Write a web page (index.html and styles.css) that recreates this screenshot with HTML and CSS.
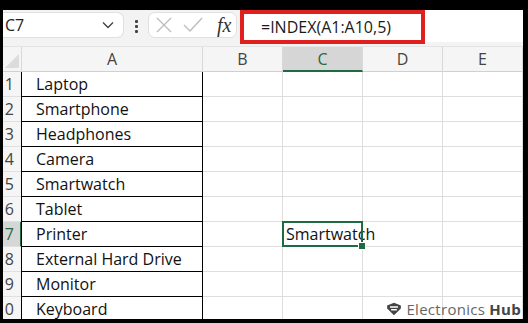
FILE: index.html
```html
<!DOCTYPE html>
<html lang="en">
<head>
    <meta charset="UTF-8">
    <title>INDEX example</title>
    <link rel="stylesheet" href="styles.css">
</head>
<body>
    <div class="screen">
        <div class="toolbar">
            <div class="namebox">
                <span>C7</span>
                <svg class="chev" width="12" height="8" viewBox="0 0 12 8"><path d="M1 1.5 L6 6.5 L11 1.5" fill="none" stroke="#444" stroke-width="1.4"/></svg>
            </div>
            <div class="dots"><i></i><i></i><i></i></div>
            <div class="fxbox">
                <svg width="18" height="18" viewBox="0 0 18 18"><path d="M2 2 L16 16 M16 2 L2 16" stroke="#bdbdbd" stroke-width="1.4"/></svg>
                <svg width="20" height="16" viewBox="0 0 20 16"><path d="M1 8 L7 14 L19 1" fill="none" stroke="#bdbdbd" stroke-width="1.4"/></svg>
                <span class="fx">fx</span>
            </div>
            <div class="formula">
                <div class="highlight">=INDEX(A1:A10,5)</div>
            </div>
        </div>
        <div class="sheet">
            <div class="corner"><span class="tri"></span></div>
            <div class="colhead">A</div>
            <div class="colhead">B</div>
            <div class="colhead active">C</div>
            <div class="colhead">D</div>
            <div class="colhead">E</div>

            <div class="rowhead">1</div><div class="cell data">Laptop</div><div class="cell"></div><div class="cell"></div><div class="cell"></div><div class="cell"></div>
            <div class="rowhead">2</div><div class="cell data">Smartphone</div><div class="cell"></div><div class="cell"></div><div class="cell"></div><div class="cell"></div>
            <div class="rowhead">3</div><div class="cell data">Headphones</div><div class="cell"></div><div class="cell"></div><div class="cell"></div><div class="cell"></div>
            <div class="rowhead">4</div><div class="cell data">Camera</div><div class="cell"></div><div class="cell"></div><div class="cell"></div><div class="cell"></div>
            <div class="rowhead">5</div><div class="cell data">Smartwatch</div><div class="cell"></div><div class="cell"></div><div class="cell"></div><div class="cell"></div>
            <div class="rowhead">6</div><div class="cell data">Tablet</div><div class="cell"></div><div class="cell"></div><div class="cell"></div><div class="cell"></div>
            <div class="rowhead active">7</div><div class="cell data">Printer</div><div class="cell"></div><div class="cell selected"><span class="value">Smartwatch</span><span class="handle"></span></div><div class="cell"></div><div class="cell"></div>
            <div class="rowhead">8</div><div class="cell data">External Hard Drive</div><div class="cell"></div><div class="cell"></div><div class="cell"></div><div class="cell"></div>
            <div class="rowhead">9</div><div class="cell data">Monitor</div><div class="cell"></div><div class="cell"></div><div class="cell"></div><div class="cell"></div>
            <div class="rowhead">10</div><div class="cell data">Keyboard</div><div class="cell"></div><div class="cell"></div><div class="cell"></div><div class="cell"></div>
        </div>
        <div class="watermark">
            <svg width="16" height="14" viewBox="0 0 14 12"><path d="M7 0.5 L13 3 L13 5.5 L7 11.5 L1 5.5 L1 3 Z" fill="#444"/><path d="M3.5 4.2 L10.5 4.2 M4.5 6.6 L9.5 6.6" stroke="#fff" stroke-width="1.3"/></svg>
            <span>Electronics</span> <b>Hub</b>
        </div>
    </div>
</body>
</html>
```

FILE: styles.css
```css
html, body {
    margin: 0;
    padding: 0;
    background: #000;
}

.screen {
    position: relative;
    width: 520px;
    height: 309px;
    margin: 10px 0 0 3px;
    background: #fff;
    overflow: hidden;
    font-family: "Open Sans", "Noto Sans", sans-serif;
}

.toolbar {
    display: flex;
    align-items: flex-start;
    height: 37px;
    background: #f3f3f3;
    border-bottom: 1px solid #e3e3e3;
    box-sizing: border-box;
}

.namebox {
    display: flex;
    align-items: center;
    justify-content: space-between;
    width: 121px;
    height: 26px;
    margin-top: 2px;
    padding: 0 9px 0 2px;
    box-sizing: border-box;
    background: #fff;
    border: 1px solid #e0e0e0;
    border-left: none;
    border-radius: 0 7px 7px 0;
    font-size: 16px;
    color: #222;
}

.dots {
    display: flex;
    flex-direction: column;
    gap: 2px;
    margin: 10px 10px 0 11px;
}

.dots i {
    display: block;
    width: 3px;
    height: 3px;
    background: #444;
    border-radius: 1px;
}

.fxbox {
    display: flex;
    align-items: center;
    gap: 10px;
    width: 89px;
    height: 26px;
    margin-top: 2px;
    padding: 0 4px 0 6px;
    box-sizing: border-box;
    background: #fff;
    border: 1px solid #e0e0e0;
    border-radius: 7px;
}

.fx {
    margin-left: 4px;
    font-family: "Liberation Serif", serif;
    font-style: italic;
    font-size: 20px;
    color: #333;
}

.formula {
    flex: 1;
    height: 32px;
    margin-left: 3px;
    background: #fff;
}

.highlight {
    width: 185px;
    height: 34px;
    box-sizing: border-box;
    border: 4px solid #e0201e;
    padding: 2px 0 0 17px;
    font-size: 16px;
    color: #1a1a1a;
}

.sheet {
    display: grid;
    grid-template-columns: 19px 181px 80px 80px 80px 80px;
    grid-auto-rows: 25px;
}

.corner {
    position: relative;
    background: #f5f5f5;
    border-right: 1px solid #d9d9d9;
    border-bottom: 1px solid #d0d0d0;
}

.tri {
    position: absolute;
    right: 2px;
    bottom: 3px;
    width: 0;
    height: 0;
    border-left: 14px solid transparent;
    border-bottom: 14px solid #dcdcdc;
}

.colhead {
    display: flex;
    align-items: center;
    justify-content: center;
    background: #f5f5f5;
    border-right: 1px solid #d9d9d9;
    border-bottom: 1px solid #d0d0d0;
    font-size: 16px;
    color: #444;
}

.colhead.active {
    background: #d6d6d6;
    border-bottom: 2px solid #1e6b41;
    color: #1e6b41;
}

.rowhead {
    display: flex;
    align-items: center;
    justify-content: flex-end;
    padding-right: 7px;
    background: #f5f5f5;
    border-right: 1px solid #d9d9d9;
    border-bottom: 1px solid #e0e0e0;
    font-size: 16px;
    color: #444;
    overflow: hidden;
    white-space: nowrap;
}

.rowhead.active {
    background: #d6d6d6;
    border-right: 2px solid #1e6b41;
    padding-right: 6px;
    color: #1e6b41;
}

.cell {
    position: relative;
    border-right: 1px solid #dedede;
    border-bottom: 1px solid #dedede;
}

.cell.data {
    display: flex;
    align-items: center;
    padding-left: 14px;
    border: 1px solid #000;
    border-top: none;
    margin-left: -1px;
    font-size: 16px;
    color: #111;
}

.cell.selected {
    z-index: 2;
}

.value {
    position: absolute;
    left: 3px;
    top: 1px;
    font-size: 16px;
    color: #111;
    white-space: nowrap;
}

.cell.selected::after {
    content: "";
    position: absolute;
    left: -1px;
    top: -1px;
    width: 81px;
    height: 26px;
    border: 2px solid #1e6b41;
    box-sizing: border-box;
}

.handle {
    position: absolute;
    right: -4px;
    bottom: -4px;
    width: 6px;
    height: 6px;
    background: #1e6b41;
    border: 1px solid #fff;
    z-index: 3;
}

.watermark {
    position: absolute;
    right: 2px;
    bottom: 0;
    display: flex;
    align-items: center;
    gap: 4px;
    font-family: "Open Sans", sans-serif;
    font-size: 15px;
    letter-spacing: 0.3px;
    color: #666;
}

.watermark b {
    color: #444;
}
```
